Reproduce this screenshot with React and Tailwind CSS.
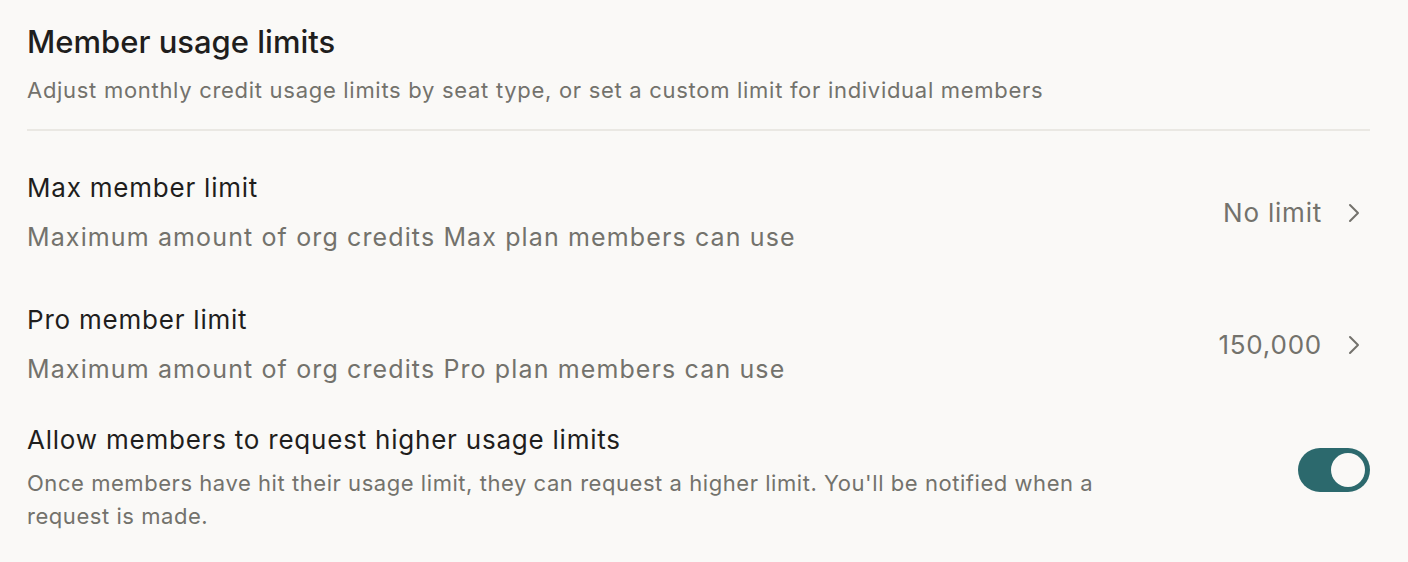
import { ChevronRight } from "lucide-react";

const LimitRow = ({ title, description, value }) => (
  <div className="flex items-center justify-between">
    <div className="flex flex-col gap-[13px]">
      <h3 className="text-[26px] leading-[36px] tracking-[0.03em] text-[#1f1e1d]">{title}</h3>
      <p className="text-[25px] leading-[36px] tracking-[0.045em] text-[#73726c]">{description}</p>
    </div>
    <button className="flex items-center gap-[16px] text-[26px] tracking-[0.03em] text-[#73726c]">
      <span>{value}</span>
      <ChevronRight className="w-[32px] h-[32px]" strokeWidth={1.5} />
    </button>
  </div>
);

export default function App() {
  return (
    <div
      className="min-h-screen w-full bg-[#faf9f7] pl-[27px] pr-[38px] pt-[24px]"
      style={{ fontFamily: "Inter, 'Noto Sans', sans-serif" }}
    >
      {/* Header */}
      <div className="pb-[24px] border-b-2 border-[#eae8e3]">
        <h2 className="text-[31px] leading-[36px] font-medium text-[#1f1e1d]">
          Member usage limits
        </h2>
        <p className="mt-[15px] text-[22px] leading-[30px] tracking-[0.032em] text-[#73726c]">
          Adjust monthly credit usage limits by seat type, or set a custom limit for individual members
        </p>
      </div>

      <div className="flex flex-col gap-[47px] pt-[39px]">
        <LimitRow
          title="Max member limit"
          description="Maximum amount of org credits Max plan members can use"
          value="No limit"
        />
        <LimitRow
          title="Pro member limit"
          description="Maximum amount of org credits Pro plan members can use"
          value="150,000"
        />
      </div>

      {/* Request toggle */}
      <div className="flex items-start justify-between mt-[35px]">
        <div className="flex flex-col gap-[9px] max-w-[1100px]">
          <h3 className="text-[26px] leading-[36px] tracking-[0.03em] text-[#1f1e1d]">
            Allow members to request higher usage limits
          </h3>
          <p className="text-[22px] leading-[33px] tracking-[0.025em] text-[#73726c]">
            Once members have hit their usage limit, they can request a higher limit. You'll be notified when a request is made.
          </p>
        </div>
        <button className="relative mt-[26px] w-[72px] h-[44px] rounded-full bg-[#2c696d] shrink-0">
          <span className="absolute right-[5px] top-[5px] w-[34px] h-[34px] rounded-full bg-[#faf9f7]" />
        </button>
      </div>
    </div>
  );
}
